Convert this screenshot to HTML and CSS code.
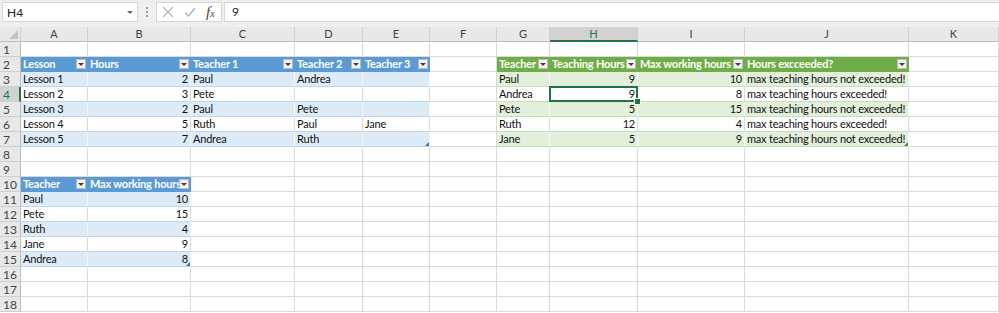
FILE: index.html
```html
<!DOCTYPE html>
<html>
<head>
<meta charset="utf-8">
<link rel="stylesheet" href="styles.css">
</head>
<body>
<div class="app">
  <div class="fbar">
    <div class="namebox"><span class="nb-text">H4</span><span class="nb-dd"></span></div>
    <div class="grip"><i></i><i></i><i></i></div>
    <div class="fxbox">
      <svg class="ic" width="12" height="12" viewBox="0 0 12 12"><path d="M1 1 L11 11 M11 1 L1 11" stroke="#b0b0b0" stroke-width="1.2" fill="none"/></svg>
      <svg class="ic" width="12" height="12" viewBox="0 0 12 12"><path d="M1 6.5 L4.5 10 L11 2" stroke="#b0b0b0" stroke-width="1.4" fill="none"/></svg>
      <span class="fx">f<span class="fx-x">x</span></span>
    </div>
    <div class="formula">9</div>
  </div>
  <div class="sheet">
    <!-- header row -->
    <div class="corner"></div>
    <div class="ch">A</div><div class="ch">B</div><div class="ch">C</div><div class="ch">D</div><div class="ch">E</div><div class="ch">F</div><div class="ch">G</div><div class="ch sel">H</div><div class="ch">I</div><div class="ch">J</div><div class="ch">K</div>
    <!-- row 1 -->
    <div class="rh">1</div>
    <div class="c"></div><div class="c"></div><div class="c"></div><div class="c"></div><div class="c"></div><div class="c"></div><div class="c"></div><div class="c"></div><div class="c"></div><div class="c"></div><div class="c"></div>
    <!-- row 2 -->
    <div class="rh">2</div>
    <div class="c bh"><span class="t">Lesson</span><span class="flt"></span></div>
    <div class="c bh"><span class="t">Hours</span><span class="flt"></span></div>
    <div class="c bh"><span class="t">Teacher 1</span><span class="flt"></span></div>
    <div class="c bh"><span class="t">Teacher 2</span><span class="flt"></span></div>
    <div class="c bh"><span class="t">Teacher 3</span><span class="flt"></span></div>
    <div class="c"></div>
    <div class="c gh"><span class="t">Teacher</span><span class="flt"></span></div>
    <div class="c gh"><span class="t">Teaching Hours</span><span class="flt"></span></div>
    <div class="c gh"><span class="t">Max working hours</span><span class="flt"></span></div>
    <div class="c gh"><span class="t">Hours excceeded?</span><span class="flt"></span></div>
    <div class="c"></div>
    <!-- row 3 -->
    <div class="rh">3</div>
    <div class="c bb">Lesson 1</div><div class="c bb n">2</div><div class="c bb">Paul</div><div class="c bb">Andrea</div><div class="c bb"></div>
    <div class="c"></div>
    <div class="c gb">Paul</div><div class="c gb n">9</div><div class="c gb n">10</div><div class="c gb">max teaching hours not exceeded!</div>
    <div class="c"></div>
    <!-- row 4 -->
    <div class="rh sel">4</div>
    <div class="c bw">Lesson 2</div><div class="c bw n">3</div><div class="c bw">Pete</div><div class="c bw"></div><div class="c bw"></div>
    <div class="c"></div>
    <div class="c gw">Andrea</div><div class="c gw n active">9</div><div class="c gw n">8</div><div class="c gw">max teaching hours exceeded!</div>
    <div class="c"></div>
    <!-- row 5 -->
    <div class="rh">5</div>
    <div class="c bb">Lesson 3</div><div class="c bb n">2</div><div class="c bb">Paul</div><div class="c bb">Pete</div><div class="c bb"></div>
    <div class="c"></div>
    <div class="c gb">Pete</div><div class="c gb n">5</div><div class="c gb n">15</div><div class="c gb">max teaching hours not exceeded!</div>
    <div class="c"></div>
    <!-- row 6 -->
    <div class="rh">6</div>
    <div class="c bw">Lesson 4</div><div class="c bw n">5</div><div class="c bw">Ruth</div><div class="c bw">Paul</div><div class="c bw">Jane</div>
    <div class="c"></div>
    <div class="c gw">Ruth</div><div class="c gw n">12</div><div class="c gw n">4</div><div class="c gw">max teaching hours exceeded!</div>
    <div class="c"></div>
    <!-- row 7 -->
    <div class="rh">7</div>
    <div class="c bb">Lesson 5</div><div class="c bb n">7</div><div class="c bb">Andrea</div><div class="c bb">Ruth</div><div class="c bb end-b"></div>
    <div class="c"></div>
    <div class="c gb">Jane</div><div class="c gb n">5</div><div class="c gb n">9</div><div class="c gb end-g">max teaching hours not exceeded!</div>
    <div class="c"></div>
    <!-- row 8 -->
    <div class="rh">8</div>
    <div class="c"></div><div class="c"></div><div class="c"></div><div class="c"></div><div class="c"></div><div class="c"></div><div class="c"></div><div class="c"></div><div class="c"></div><div class="c"></div><div class="c"></div>
    <!-- row 9 -->
    <div class="rh">9</div>
    <div class="c"></div><div class="c"></div><div class="c"></div><div class="c"></div><div class="c"></div><div class="c"></div><div class="c"></div><div class="c"></div><div class="c"></div><div class="c"></div><div class="c"></div>
    <!-- row 10 -->
    <div class="rh">10</div>
    <div class="c bh"><span class="t">Teacher</span><span class="flt"></span></div>
    <div class="c bh ovl"><span class="t">Max working hours</span><span class="flt"></span></div>
    <div class="c"></div><div class="c"></div><div class="c"></div><div class="c"></div><div class="c"></div><div class="c"></div><div class="c"></div><div class="c"></div><div class="c"></div>
    <!-- row 11 -->
    <div class="rh">11</div>
    <div class="c bb">Paul</div><div class="c bb n">10</div>
    <div class="c"></div><div class="c"></div><div class="c"></div><div class="c"></div><div class="c"></div><div class="c"></div><div class="c"></div><div class="c"></div><div class="c"></div>
    <!-- row 12 -->
    <div class="rh">12</div>
    <div class="c bw">Pete</div><div class="c bw n">15</div>
    <div class="c"></div><div class="c"></div><div class="c"></div><div class="c"></div><div class="c"></div><div class="c"></div><div class="c"></div><div class="c"></div><div class="c"></div>
    <!-- row 13 -->
    <div class="rh">13</div>
    <div class="c bb">Ruth</div><div class="c bb n">4</div>
    <div class="c"></div><div class="c"></div><div class="c"></div><div class="c"></div><div class="c"></div><div class="c"></div><div class="c"></div><div class="c"></div><div class="c"></div>
    <!-- row 14 -->
    <div class="rh">14</div>
    <div class="c bw">Jane</div><div class="c bw n">9</div>
    <div class="c"></div><div class="c"></div><div class="c"></div><div class="c"></div><div class="c"></div><div class="c"></div><div class="c"></div><div class="c"></div><div class="c"></div>
    <!-- row 15 -->
    <div class="rh">15</div>
    <div class="c bb">Andrea</div><div class="c bb n end-b">8</div>
    <div class="c"></div><div class="c"></div><div class="c"></div><div class="c"></div><div class="c"></div><div class="c"></div><div class="c"></div><div class="c"></div><div class="c"></div>
    <!-- row 16 -->
    <div class="rh">16</div>
    <div class="c"></div><div class="c"></div><div class="c"></div><div class="c"></div><div class="c"></div><div class="c"></div><div class="c"></div><div class="c"></div><div class="c"></div><div class="c"></div><div class="c"></div>
    <!-- row 17 -->
    <div class="rh">17</div>
    <div class="c"></div><div class="c"></div><div class="c"></div><div class="c"></div><div class="c"></div><div class="c"></div><div class="c"></div><div class="c"></div><div class="c"></div><div class="c"></div><div class="c"></div>
    <!-- row 18 -->
    <div class="rh">18</div>
    <div class="c"></div><div class="c"></div><div class="c"></div><div class="c"></div><div class="c"></div><div class="c"></div><div class="c"></div><div class="c"></div><div class="c"></div><div class="c"></div><div class="c"></div>
  </div>
</div>
</body>
</html>
```
FILE: styles.css
```css
* { box-sizing: border-box; }
html, body { margin: 0; padding: 0; background: #ffffff; }
body {
  width: 999px;
  height: 313px;
  overflow: hidden;
  font-family: Lato, "Liberation Sans", sans-serif;
  font-size: 11px;
  letter-spacing: -0.2px;
  color: #111;
}

.fbar {
  height: 27px;
  background: #efefef;
  display: flex;
  align-items: flex-start;
  padding: 2px 0 0 2px;
  letter-spacing: 0;
}
.namebox {
  width: 136px;
  height: 20px;
  background: #fff;
  border: 1px solid #d6d6d6;
  display: flex;
  align-items: center;
  padding: 0 4px 0 4px;
  font-size: 12px;
  color: #222;
}
.nb-text { flex: 1; }
.nb-dd {
  width: 0; height: 0;
  border-left: 3px solid transparent;
  border-right: 3px solid transparent;
  border-top: 3px solid #666;
}
.grip {
  width: 18px;
  height: 20px;
  display: flex;
  flex-direction: column;
  align-items: center;
  justify-content: center;
  gap: 2px;
}
.grip i { width: 2px; height: 2px; background: #9a9a9a; display: block; }
.fxbox {
  width: 66px;
  height: 20px;
  background: #fff;
  border: 1px solid #d6d6d6;
  display: flex;
  align-items: center;
  padding-left: 5px;
  gap: 10px;
}
.ic { display: block; }
.fx {
  font-family: "Liberation Serif", serif;
  font-style: italic;
  font-size: 15px;
  color: #444;
  line-height: 1;
}
.fx-x { font-size: 10px; }
.formula {
  flex: 1;
  height: 20px;
  margin-left: 2px;
  background: #fff;
  border: 1px solid #d6d6d6;
  border-right: none;
  padding-left: 7px;
  font-size: 12px;
  line-height: 18px;
  color: #222;
}

.sheet {
  display: grid;
  grid-template-columns: 21px 67px 103px 104px 68px 67px 67px 53px 88px 107px 164px 90px;
  grid-auto-rows: 15px;
}
.corner {
  background: #e8e8e8;
  border-right: 1px solid #cfcfcf;
  border-bottom: 1px solid #bdbdbd;
  position: relative;
}
.corner::after {
  content: "";
  position: absolute;
  right: 2px; bottom: 2px;
  border-left: 9px solid transparent;
  border-bottom: 9px solid #c3c3c3;
}
.ch {
  background: #e8e8e8;
  border-right: 1px solid #cfcfcf;
  border-bottom: 1px solid #bdbdbd;
  text-align: center;
  font-size: 11px;
  letter-spacing: 0;
  line-height: 14px;
  color: #444;
}
.ch.sel {
  background: #d2d2d2;
  color: #217346;
  border-bottom: 2px solid #217346;
}
.rh {
  background: #e8e8e8;
  border-right: 1px solid #bdbdbd;
  border-bottom: 1px solid #cfcfcf;
  font-size: 12px;
  letter-spacing: 0;
  line-height: 15px;
  color: #444;
  padding-left: 3px;
}
.rh.sel {
  background: #d2d2d2;
  color: #217346;
  border-right: 2px solid #217346;
}
.c {
  border-right: 1px solid #dadada;
  border-bottom: 1px solid #dadada;
  line-height: 14px;
  padding: 0 2px;
  white-space: nowrap;
  overflow: hidden;
  position: relative;
}
.n { text-align: right; }

.bh, .gh {
  color: #fff;
  font-weight: bold;
  display: flex;
  align-items: center;
  padding-right: 1px;
}
.bh { background: #5b9bd5; border-color: #5b9bd5; }
.gh { background: #70ad47; border-color: #70ad47; }
.t { flex: 1 1 auto; overflow: hidden; white-space: nowrap; }
.flt {
  flex: 0 0 auto;
  width: 10px;
  height: 10px;
  background: #f3f3f3;
  border: 1px solid #bcbcbc;
  position: relative;
}
.flt::after {
  content: "";
  position: absolute;
  left: 1px; top: 3px;
  border-left: 3px solid transparent;
  border-right: 3px solid transparent;
  border-top: 3px solid #404040;
}
.ovl .t { overflow: visible; }
.ovl .flt {
  position: absolute;
  right: 1px;
  top: 2px;
}

.bb { background: #ddebf7; border-right-color: #f2f7fc; border-bottom-color: #bdd7ee; }
.bw { background: #fff; border-bottom-color: #bdd7ee; }
.gb { background: #e2efda; border-right-color: #f4f9f1; border-bottom-color: #c6e0b4; }
.gw { background: #fff; border-bottom-color: #c6e0b4; }

.active { overflow: visible; }
.active::before {
  content: "";
  position: absolute;
  left: -1px; top: -1px; right: -1px; bottom: -1px;
  border: 2px solid #217346;
}
.active::after {
  content: "";
  position: absolute;
  right: -4px; bottom: -4px;
  width: 5px; height: 5px;
  background: #217346;
  border: 1px solid #fff;
  z-index: 2;
}
.end-b::after, .end-g::after {
  content: "";
  position: absolute;
  right: 0; bottom: 0;
  border-left: 4px solid transparent;
  border-bottom: 4px solid #2f75b5;
}
.end-g::after { border-bottom-color: #548235; }
```
